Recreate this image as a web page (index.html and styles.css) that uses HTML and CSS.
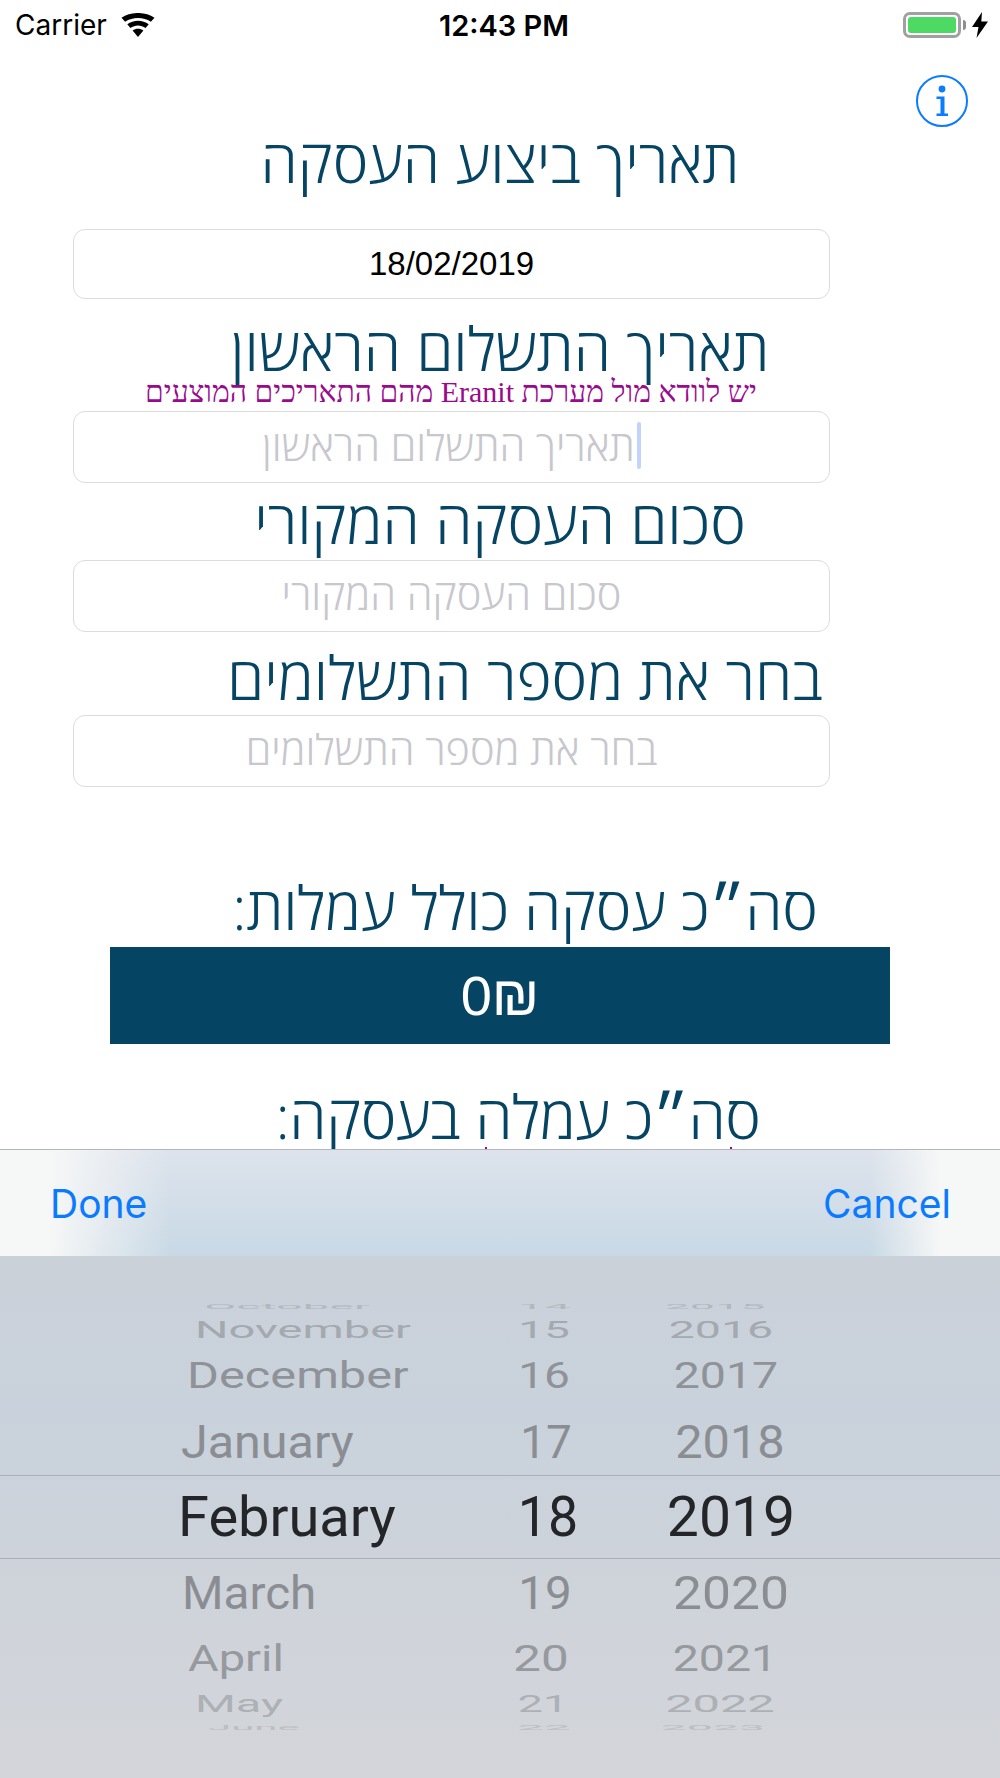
FILE: index.html
```html
<!DOCTYPE html>
<html lang="he">
<head>
<meta charset="utf-8">
<title>תאריך ביצוע העסקה</title>
<link rel="stylesheet" href="styles.css">
</head>
<body>
<div class="screen">
  <header class="status">
    <div class="status-left">
      <span class="carrier">Carrier</span>
      <svg class="wifi" viewBox="0 0 36 24" aria-hidden="true"><path d="M18 24 12.6 17.6C15.8 15.2 20.2 15.2 23.4 17.6Z"/><path d="M10.4 15 7.3 11.3C13.4 6.6 22.6 6.6 28.700 11.300L25.600 15C21 11.500 15 11.500 10.400 15Z"/><path d="M5.100 8.800 1.500 4.700C11 -1.600 25 -1.600 34.500 4.700L30.900 8.800C23.400 3.800 12.600 3.800 5.100 8.800Z"/></svg>
    </div>
    <span class="clock">12:43 PM</span>
    <div class="status-right">
      <span class="battery"><span class="battery-fill"></span></span>
      <span class="battery-nub"></span>
      <svg class="bolt" viewBox="0 0 16 26" aria-hidden="true"><path d="M10 0 0 15H6.500L4.500 26 16 9.500H9.300Z"/></svg>
    </div>
  </header>

  <main class="form" dir="rtl">
    <div class="info-row">
      <svg class="info" viewBox="0 0 52 52" aria-hidden="true"><circle cx="26" cy="26" r="25" fill="none" stroke="#0a7cff" stroke-width="2"/><circle cx="26" cy="14" r="3.400" fill="#0a7cff"/><path fill="#0a7cff" d="M20.500 21.500H28.500V38.500H32V41H20.500V38.500H24.500V24H20.500Z"/></svg>
    </div>
    <h2 class="label label-a">תאריך ביצוע העסקה</h2>
    <div class="field field-value">18/02/2019</div>
    <h2 class="label label-b">תאריך התשלום הראשון</h2>
    <p class="note">יש לוודא מול מערכת Eranit מהם התאריכים המוצעים</p>
    <div class="field field-focus"><span class="caret"></span>תאריך התשלום הראשון</div>
    <h2 class="label label-c">סכום העסקה המקורי</h2>
    <div class="field">סכום העסקה המקורי</div>
    <h2 class="label label-d">בחר את מספר התשלומים</h2>
    <div class="field">בחר את מספר התשלומים</div>
    <h2 class="label label-e">סה״כ עסקה כולל עמלות:</h2>
    <div class="total">0₪</div>
    <h2 class="label label-f">סה״כ עמלה בעסקה:</h2>
  </main>

  <span class="tick tick-a"></span>
  <span class="tick tick-b"></span>

  <section class="sheet">
    <div class="toolbar">
      <span class="tool-btn">Done</span>
      <span class="tool-btn">Cancel</span>
    </div>
    <div class="picker">
      <div class="sel-band"></div>
      <div class="wheel">
        <div class="row r-oct"><span class="m">October</span><span class="d">14</span><span class="y">2015</span></div>
        <div class="row r-nov"><span class="m">November</span><span class="d">15</span><span class="y">2016</span></div>
        <div class="row r-dec"><span class="m">December</span><span class="d">16</span><span class="y">2017</span></div>
        <div class="row r-jan"><span class="m">January</span><span class="d">17</span><span class="y">2018</span></div>
        <div class="row r-feb"><span class="m">February</span><span class="d">18</span><span class="y">2019</span></div>
        <div class="row r-mar"><span class="m">March</span><span class="d">19</span><span class="y">2020</span></div>
        <div class="row r-apr"><span class="m">April</span><span class="d">20</span><span class="y">2021</span></div>
        <div class="row r-may"><span class="m">May</span><span class="d">21</span><span class="y">2022</span></div>
        <div class="row r-jun"><span class="m">June</span><span class="d">22</span><span class="y">2023</span></div>
      </div>
    </div>
  </section>
</div>
</body>
</html>
```
FILE: styles.css
```css
* { box-sizing: border-box; }
html, body { margin: 0; padding: 0; }
body { background: #fff; font-family: "Liberation Sans", Arial, sans-serif; }
.screen { position: relative; width: 1000px; height: 1778px; overflow: hidden; background: #fff; }

.status { height: 50px; display: grid; grid-template-columns: 1fr auto 1fr; align-items: center; padding: 0 12px 0 15px; color: #000; }
.status-left { display: flex; align-items: center; gap: 13px; }
.carrier { font-family: Inter, sans-serif; font-size: 28px; }
.wifi { width: 36px; height: 24px; fill: #000; margin-top: -1px; }
.clock { font-family: Inter, sans-serif; font-weight: 600; font-size: 29px; margin-left: 5px; }
.status-right { display: flex; align-items: center; justify-content: flex-end; }
.battery { width: 58px; height: 26px; border: 3px solid #a0a0a0; border-radius: 7px; padding: 2px; display: flex; }
.battery-fill { flex: 1; background: #4cd964; border-radius: 3px; }
.battery-nub { width: 3px; height: 10px; background: #8e8e8e; margin: 0 6px 0 2px; border-radius: 0 3px 3px 0; }
.bolt { width: 16px; height: 26px; fill: #000; }

.form { display: flex; flex-direction: column; align-items: flex-start; }
.info-row { height: 83px; padding: 25px 32px 0 0; align-self: stretch; }
.info { width: 52px; height: 52px; display: block; }

.label { margin: 0; width: 1000px; height: 54px; line-height: 54px; font-size: 60px; color: #064464; text-align: center; font-family: "Open Sans", "Liberation Sans", sans-serif; font-weight: 300; white-space: nowrap; }
.label-a { margin-bottom: 42px; }
.label-b { margin-top: 22px; margin-bottom: -2px; }
.label-c { margin-top: 11px; margin-bottom: 12px; }
.label-d { margin-top: 18px; margin-bottom: 11px; padding-left: 50px; }
.label-e { margin-top: 93px; margin-bottom: 13px; padding-left: 50px; letter-spacing: -.2px; }
.label-f { margin-top: 45px; padding-left: 36px; letter-spacing: -.4px; }

.note { margin: 3px 98px 4px 0; width: 902px; height: 31px; line-height: 31px; font-family: "Liberation Serif", serif; font-size: 30px; color: #990a8c; text-align: center; white-space: nowrap; }

.field { width: 757px; height: 72px; margin-right: 170px; padding-bottom: 4px; border: 1px solid #dcdcdc; border-radius: 12px; display: flex; align-items: center; justify-content: center; font-family: "Open Sans", "Liberation Sans", sans-serif; font-weight: 300; font-size: 41.5px; color: #c7c7cd; }
.field-value { height: 70px; padding-bottom: 0; color: #000; font-family: "Liberation Sans", sans-serif; font-size: 33px; font-weight: 400; }
.caret { width: 4px; height: 47px; background: #c4d3fb; border-radius: 2px; margin-left: 2px; }

.total { width: 780px; height: 97px; margin-right: 110px; background: #064464; color: #fff; font-size: 56px; display: flex; align-items: center; justify-content: center; direction: ltr; }

.tick { position: absolute; top: 1147px; width: 2px; height: 3px; background: #990a8c; }
.tick-a { left: 485px; }
.tick-b { left: 730px; }

.sheet { position: absolute; left: 0; right: 0; top: 1149px; bottom: 0; font-family: Roboto, sans-serif; }
.toolbar { height: 107px; border-top: 1px solid #b4b6ba; display: flex; justify-content: space-between; align-items: center; padding: 0 49px 0 50px; font-family: Inter, sans-serif; font-size: 39px; color: #0a7aff;
  background:
    linear-gradient(90deg, #f6f7f7 5%, rgba(246,247,247,0) 17%, rgba(246,247,247,0) 87%, #f6f7f7 94%),
    linear-gradient(180deg, #dde3ec 0%, #c8d9e5 100%); }
.picker { position: relative; height: 522px; padding-top: 44px; background: linear-gradient(180deg, #cbd1d9 0%, #c9d2dc 30%, #cfd3da 65%, #d3d5da 100%); }
.sel-band { position: absolute; left: 0; right: 0; top: 219px; height: 84px; border-top: 1px solid #aab0b8; border-bottom: 1px solid #aab0b8; }
.wheel { display: flex; flex-direction: column; position: relative; }
.row { display: flex; align-items: center; color: #8a8e93; font-size: 56px; line-height: 60px; }
.row span { display: block; height: 60px; white-space: nowrap; flex: none; }
.row .m { width: 488px; padding-left: 181px; transform-origin: 181px 50%; }
.row .d { width: 120px; text-align: center; }
.row .y { width: 180px; margin-left: 32px; text-align: center; }

.r-oct { height: 12px; color: #b3b8be; }
.r-nov { height: 36px; color: #a4a9b0; }
.r-dec { height: 56px; color: #8f9398; }
.r-jan { height: 76px; }
.r-feb { height: 74px; color: #242528; }
.r-mar { height: 78px; }
.r-apr { height: 52px; color: #96999e; }
.r-may { height: 40px; color: #adb0b5; }
.r-jun { height: 6px; color: #bcbec3; }

.r-oct .m { transform: translateX(23px) scale(.84,.14); }
.r-oct .d { transform: translateX(-4px) scale(.85,.14); }
.r-oct .y { transform: translateX(-15px) scale(.8,.14); }
.r-nov .m { transform: translateX(14px) scale(.84,.42); }
.r-nov .d { transform: translateX(-4px) scale(.82,.42); }
.r-nov .y { transform: translateX(-9px) scale(.83,.42); }
.r-dec .m { transform: translateX(6px) scale(.87,.65); }
.r-dec .d { transform: translateX(-4px) scale(.82,.65); }
.r-dec .y { transform: translateX(-4px) scale(.83,.65); }
.r-jan .m { transform: scale(.865,.83); }
.r-jan .d { transform: translateX(-2px) scale(.82,.83); }
.r-jan .y { transform: scale(.87,.83); }
.r-feb .m { transform: translateX(-3px) scaleX(1); }
.r-feb .d { transform: scaleX(.96); }
.r-feb .y { transform: translateX(1px) scaleX(1.02); }
.r-mar .m { transform: translateX(1px) scale(.85,.83); }
.r-mar .d { transform: translateX(-3px) scale(.85,.83); }
.r-mar .y { transform: translateX(1px) scale(.92,.83); }
.r-apr .m { transform: translateX(7px) scale(.84,.67); }
.r-apr .d { transform: translateX(-7px) scale(.88,.67); }
.r-apr .y { transform: translateX(-5px) scale(.83,.67); }
.r-may .m { transform: translateX(14px) scale(.835,.42); }
.r-may .d { transform: translateX(-5px) scale(.8,.42); }
.r-may .y { transform: translateX(-10px) scale(.87,.42); }
.r-jun .m { transform: translateX(27px) scale(.75,.14); }
.r-jun .d { transform: translateX(-4px) scale(.85,.14); }
.r-jun .y { transform: translateX(-17px) scale(.83,.14); }
```
